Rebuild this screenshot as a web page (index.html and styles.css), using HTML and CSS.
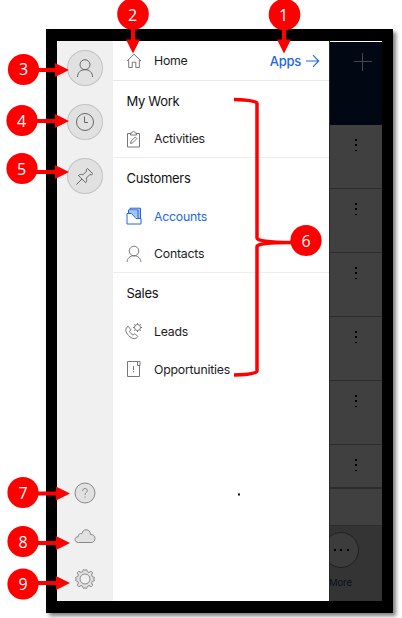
FILE: index.html
```html
<!DOCTYPE html>
<html lang="en">
<head>
<meta charset="utf-8">
<title>Site map</title>
<link rel="stylesheet" href="styles.css">
</head>
<body>
<div class="phone">
  <nav class="rail">
    <div class="rail-top">
      <span class="round"><svg width="36" height="36" viewBox="0 0 36 36"><circle cx="18" cy="14.700" r="5"/><path d="M10.500 27c0-4.500 3-7.300 7.500-7.300s7.500 2.800 7.500 7.300"/></svg></span>
      <span class="round"><svg width="36" height="36" viewBox="0 0 36 36"><circle cx="18" cy="18" r="8.500"/><path d="M17.500 12.500v6h3.500"/></svg></span>
      <span class="round"><svg width="36" height="36" viewBox="0 0 36 36"><path d="M20.500 10.500l5.300 5.300-1.300 1-1.600-.3-3.600 3.700c.7 1.700.4 3.400-.7 4.500l-7.200-7.200c1.200-1.100 2.800-1.400 4.500-.7l3.600-3.600-.3-1.500zM15 21L9.500 26.500"/></svg></span>
    </div>
    <div class="rail-bottom">
      <svg width="22" height="22" viewBox="0 0 22 22"><circle class="tint" cx="11" cy="11" r="10"/><path d="M8.700 8.900c0-1.500 1-2.400 2.300-2.400s2.300.8 2.300 2.100c0 2-2.300 2-2.300 4.300M11 14.500v1.200"/></svg>
      <svg width="22" height="16" viewBox="0 0 22 16"><path class="tint" d="M4.500 14.500C2.300 14.500 1 13.200 1 11.500 1 9.700 2.500 8.700 4.200 8.700 4 6.500 6 5 7.900 5.700 8.500 3.200 10 1.700 12 1.700c2.800 0 4.500 2 4.500 4.800 2.600-.2 4.500 1.500 4.500 4 0 2.500-1.700 4-4 4z"/></svg>
      <svg width="22" height="22" viewBox="0 0 22 22"><path class="tint" d="M9.500 1.500Q11 3 12.500 1.500L13.500 3.800 15 4.400 17.200 3.300 18.700 4.800 17.600 7 18.200 8.500 20.500 9.500Q19 11 20.500 12.500L18.200 13.500 17.600 15 18.700 17.200 17.200 18.700 15 17.600 13.500 18.200 12.500 20.500Q11 19 9.500 20.500L8.500 18.200 7 17.600 4.800 18.700 3.300 17.200 4.400 15 3.800 13.500 1.500 12.500Q3 11 1.500 9.500L3.800 8.500 4.400 7 3.300 4.800 4.800 3.300 7 4.400 8.500 3.800z"/><circle class="hole" cx="11" cy="11" r="5"/></svg>
    </div>
  </nav>
  <main class="menu">
    <div class="item home">
      <svg class="icon" width="16" height="16" viewBox="0 0 16 16"><path d="M1 8L8 1.200 15 8M2.700 6.800v7.700h3.500V9.200h3.600v5.300h3.500V6.800"/></svg>
      <span>Home</span>
      <a class="apps">Apps<svg width="15" height="14" viewBox="0 0 15 14"><path d="M1 7h12.500M8 1.200L13.700 7 8 12.800"/></svg></a>
    </div>
    <section class="work">
      <h2>My Work</h2>
      <div class="item"><svg class="icon" width="16" height="18" viewBox="0 0 16 18"><path d="M5 3.500H1.500v13.500h12V3.500H10M4.500 5V3H6C6.200.8 8.800.8 9 3h1.500v2zM4.500 13.500l.6-2.300 4.200-4.200 1.600 1.600-4.200 4.200z"/></svg><span>Activities</span></div>
    </section>
    <section class="customers">
      <h2>Customers</h2>
      <div class="item active"><svg class="icon" width="16" height="18" viewBox="0 0 16 18"><path class="fade" d="M4 1.500h10.500V11H12.500L9.500 10 5.500 6.500H3V4h9V3H4z"/><path d="M1 6.500h4.500L10 11.500h5V17H1zM2.500 6V3h9.500v8M4 3V1.200h10.500V11"/></svg><span>Accounts</span></div>
      <div class="item"><svg class="icon" width="16" height="18" viewBox="0 0 16 18"><circle cx="8" cy="6" r="4.800"/><path d="M1 17c.4-3.900 3-6.200 7-6.200s6.600 2.300 7 6.200"/></svg><span>Contacts</span></div>
    </section>
    <section>
      <h2>Sales</h2>
      <div class="item"><svg class="icon" width="18" height="18" viewBox="0 0 18 18"><path d="M2 5.200c-2 2-1.500 4.800 1.500 8.200 3 3.200 6.200 4.200 8.500 2.100l.8-.9-2.900-2.900-1.800 1.300c-1.500-.5-3-2-3.500-3.700l1.300-1.500L3.200 4.300z"/><circle cx="12.500" cy="5.500" r="3"/><path d="M12.500 1v1.500M12.500 8.500V10M8 5.500h1.500M15.500 5.500H17M9.300 2.300l1 1M14.700 7.700l1 1M15.700 2.300l-1 1M9.300 8.700l1-1"/></svg><span>Leads</span></div>
      <div class="item"><svg class="icon" width="16" height="18" viewBox="0 0 16 18"><path d="M11.500 1.500h-10v15h12V5.500M11.500 5.500v-4H14v4zM7.500 6v4M7.500 11.200v1.200"/></svg><span>Opportunities</span></div>
    </section>
  </main>
  <aside class="behind">
    <div class="bar"><svg width="18" height="18" viewBox="0 0 18 18"><path d="M8.500 0v18M0 8.500h18"/></svg></div>
    <div class="row"><i></i><i></i><i></i></div>
    <div class="row"><i></i><i></i><i></i></div>
    <div class="row"><i></i><i></i><i></i></div>
    <div class="row"><i></i><i></i><i></i></div>
    <div class="row"><i></i><i></i><i></i></div>
    <div class="row last"><i></i><i></i><i></i></div>
    <div class="blank"></div>
    <div class="tabs"><div class="more"><i></i><i></i><i></i></div><span>More</span></div>
  </aside>
</div>
<svg class="notes" width="402" height="618" viewBox="0 0 402 618">
  <rect x="238" y="493.500" width="2" height="2" class="speck"/>
  <g class="arrows">
    <path d="M284 25v18M133 25v18M35 70h24M34 121h24M34 172h24M35 493.500h24M35 543h24M35 583h24"/>
  </g>
  <g class="heads">
    <path d="M277 39.500h14l-7 14zM126 39.500h14l-7 14zM55 63l14 7-14 7zM55 114l14 7-14 7zM55 165l14 7-14 7zM56 486.500l14 7-14 7zM56 536l14 7-14 7zM56 576l14 7-14 7z"/>
    <circle cx="284.500" cy="14.500" r="15.800"/><circle cx="133" cy="14" r="15.800"/>
    <circle cx="23.500" cy="69.500" r="15.600"/><circle cx="22" cy="120.500" r="15.600"/><circle cx="22" cy="168.500" r="15.600"/>
    <circle cx="306" cy="240.500" r="15.600"/>
    <circle cx="23" cy="492.500" r="15.600"/><circle cx="23" cy="541.500" r="15.600"/><circle cx="23" cy="584" r="15.600"/>
  </g>
  <path class="brace" d="M234 99.500q23 .5 23 4V238q0 4 35 4.500q-35 0-35 4V371q0 3.500-23 4"/>
  <g class="nums">
    <text x="283.500" y="21">1</text><text x="132.500" y="20.500">2</text><text x="23.500" y="75">3</text>
    <text x="21.500" y="127">4</text><text x="21.500" y="175">5</text><text x="306" y="246.500">6</text>
    <text x="23" y="499">7</text><text x="23" y="547.500">8</text><text x="23" y="590">9</text>
  </g>
</svg>
</body>
</html>
```

FILE: styles.css
```css
* { box-sizing: border-box; }
body {
  margin: 0;
  width: 402px;
  height: 618px;
  overflow: hidden;
  position: relative;
  background: #fff;
  font-family: Inter, "Liberation Sans", sans-serif;
  color: #1c1c1c;
}
svg { display: block; flex: none; fill: none; stroke: #666; stroke-width: 1; }
.phone {
  display: flex;
  width: 347px;
  height: 584px;
  margin: 29px 0 0 46px;
  border: solid #000;
  border-width: 12px 11px 12px 11px;
  box-shadow: 3px 3px 4px rgba(0, 0, 0, .5);
}
.rail {
  width: 56px;
  background: #f0f0f0;
  display: flex;
  flex-direction: column;
  justify-content: space-between;
  align-items: center;
  padding: 9px 0 11px;
}
.rail-top { display: flex; flex-direction: column; gap: 18px; }
.round {
  width: 36px;
  height: 36px;
  border-radius: 50%;
  background: #e1e1e1;
  box-shadow: inset 0 0 0 1px #c4c4c4;
}
.rail-bottom { display: flex; flex-direction: column; align-items: center; }
.rail-bottom svg { stroke: #888; }
.rail-bottom svg:nth-child(2) { margin: 24px 0; }
.tint { fill: #e1e1e1; }
.hole { fill: #f0f0f0; }
.menu { width: 216px; background: #fff; }
.item {
  height: 38px;
  display: flex;
  align-items: center;
  padding-left: 12px;
  font-size: 12.3px;
  letter-spacing: -.22px;
}
.item .icon { width: 18px; margin-right: 11px; }
.item .icon { stroke: #777; }
.home { height: 40px; border-bottom: 1px solid #e9e9e9; }
.apps {
  margin-left: auto;
  padding-right: 9px;
  display: flex;
  align-items: center;
  gap: 4px;
  color: #2266e3;
  font-size: 13px;
  font-weight: 500;
  letter-spacing: -.25px;
}
.apps svg { stroke: #2266e3; stroke-width: 1.1; }
section { border-bottom: 1px solid #ededed; }
section:last-child { border: 0; }
h2 {
  margin: 0;
  height: 39px;
  padding-left: 13.500px;
  font-size: 13px;
  font-weight: 400;
  letter-spacing: -.3px;
  line-height: 40px;
  color: #111;
}
.work .item { height: 37px; }
.customers .item:last-child { height: 37px; }
.active { color: #2266e3; }
.item.active .icon { stroke: #2266e3; }
.fade { fill: #a9c3f5; stroke: none; }
.behind {
  width: 53px;
  background: #404040;
  border-left: 1px solid #292929;
  display: flex;
  flex-direction: column;
  overflow: hidden;
}
.bar {
  height: 84px;
  background: #020714;
  border-top: 1px solid #fff;
  padding: 11px 0 0 24px;
}
.bar svg { stroke: #414650; }
.row {
  height: 64px;
  border-bottom: 1px solid #2d2d2d;
  padding: 14px 0 0 25px;
  display: flex;
  flex-direction: column;
  gap: 3.700px;
}
.behind i { width: 1.600px; height: 1.600px; background: #000; flex: none; }
.row.last { height: 44px; border-bottom-width: 2px; }
.blank { height: 37px; border-bottom: 1px solid #2d2d2d; }
.tabs { flex: 1; background: #343434; }
.more {
  width: 36px;
  height: 36px;
  margin: 6px 0 0 -7px;
  border: 1px solid #202020;
  border-radius: 50%;
  background: #3c3c3c;
  display: flex;
  align-items: center;
  justify-content: center;
  gap: 4.500px;
}
.more i { width: 2px; height: 2px; }
.tabs span { display: block; margin: 8px 0 0 -1px; font-size: 9.500px; line-height: 13px; letter-spacing: -.1px; color: #080f22; }
.notes { position: absolute; left: 0; top: 0; stroke: none; }
.speck { fill: #111; }
.arrows { stroke: #f00; stroke-width: 4; }
.heads { fill: #f00; }
.brace { stroke: #f00; stroke-width: 3.500; }
.nums { fill: #fff; font: 16px "Open Sans", sans-serif; text-anchor: middle; }
```
